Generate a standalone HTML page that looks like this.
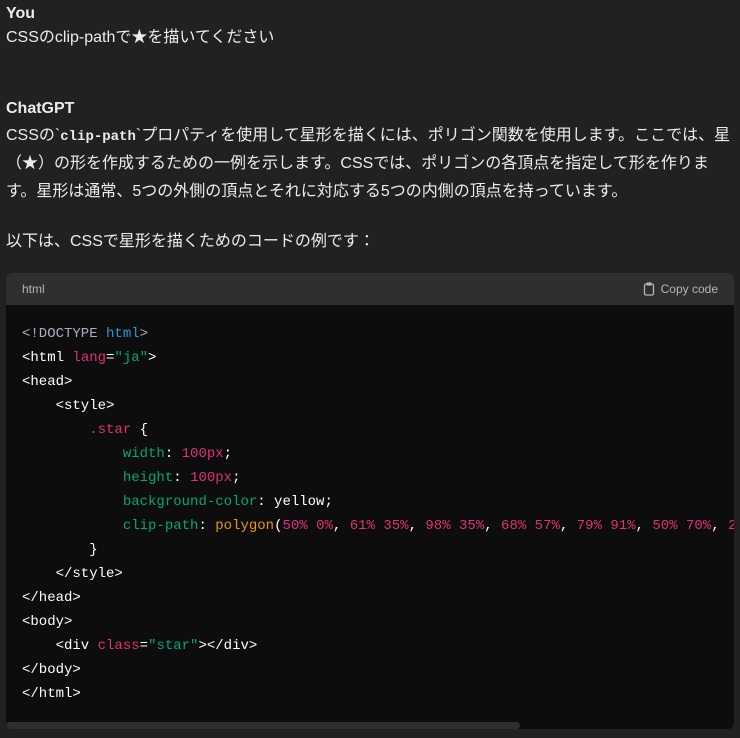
<!DOCTYPE html>
<html><head><meta charset="utf-8"><style>
body{margin:0;background:#212121;width:740px;height:738px;overflow:hidden;color:#ececec;font-family:"Liberation Sans","Noto Sans CJK JP",sans-serif;font-size:16px;}
.t{position:absolute;left:6px;white-space:nowrap;line-height:20px;}
code{font-family:"Liberation Mono",monospace;font-weight:bold;font-size:14px;}
.box{position:absolute;left:6px;top:273px;width:728px;height:456px;background:#0d0d0d;border-radius:6px;overflow:hidden;}
.hd{height:32px;background:#2f2f2f;color:#b4b4b4;font-size:12px;line-height:32px;padding:0 16px;position:relative;}
.cp{position:absolute;right:16px;top:0;display:flex;align-items:center;gap:5px;}
pre{margin:0;position:absolute;top:49px;left:16px;font-family:"Liberation Mono",monospace;font-size:14px;line-height:24px;color:#fff;white-space:pre;}
.p{color:#df3079}.g{color:#00a67d}.bl{color:#2e95d3}.o{color:#e9950c}.gr{color:#a9aec1}
.sb{position:absolute;left:0;bottom:0;width:514px;height:7px;background:#2f2f2f;border-radius:4px;}
</style></head><body>
<div class="t" style="top:4px;font-weight:bold;">You</div>
<div class="t" style="top:28px;">CSSのclip-pathで★を描いてください</div>
<div class="t" style="top:99px;font-weight:bold;">ChatGPT</div>
<div class="t" style="top:126px;">CSSの`<code>clip-path</code>`プロパティを使用して星形を描くには、ポリゴン関数を使用します。ここでは、星</div>
<div class="t" style="top:154px;">（★）の形を作成するための一例を示します。CSSでは、ポリゴンの各頂点を指定して形を作りま</div>
<div class="t" style="top:182px;">す。星形は通常、5つの外側の頂点とそれに対応する5つの内側の頂点を持っています。</div>
<div class="t" style="top:232px;">以下は、CSSで星形を描くためのコードの例です：</div>
<div class="box">
<div class="hd">html<span class="cp"><svg width="14" height="14" viewBox="0 0 14 14" fill="none" stroke="#b4b4b4" stroke-width="1.3"><rect x="2.5" y="2" width="9" height="11" rx="1.5"/><rect x="5" y="1" width="4" height="2" rx=".5"/></svg>Copy code</span></div>
<pre><span class="gr">&lt;!DOCTYPE <span class="bl">html</span>&gt;</span>
&lt;html <span class="p">lang</span>=<span class="g">"ja"</span>&gt;
&lt;head&gt;
    &lt;style&gt;
        <span class="p">.star</span> {
            <span class="g">width</span>: <span class="p">100px</span>;
            <span class="g">height</span>: <span class="p">100px</span>;
            <span class="g">background-color</span>: yellow;
            <span class="g">clip-path</span>: <span class="o">polygon</span>(<span class="p">50%</span> <span class="p">0%</span>, <span class="p">61%</span> <span class="p">35%</span>, <span class="p">98%</span> <span class="p">35%</span>, <span class="p">68%</span> <span class="p">57%</span>, <span class="p">79%</span> <span class="p">91%</span>, <span class="p">50%</span> <span class="p">70%</span>, <span class="p">21%</span> <span class="p">91%</span>);
        }
    &lt;/style&gt;
&lt;/head&gt;
&lt;body&gt;
    &lt;div <span class="p">class</span>=<span class="g">"star"</span>&gt;&lt;/div&gt;
&lt;/body&gt;
&lt;/html&gt;</pre>
<div class="sb"></div>
</div>
</body></html>
